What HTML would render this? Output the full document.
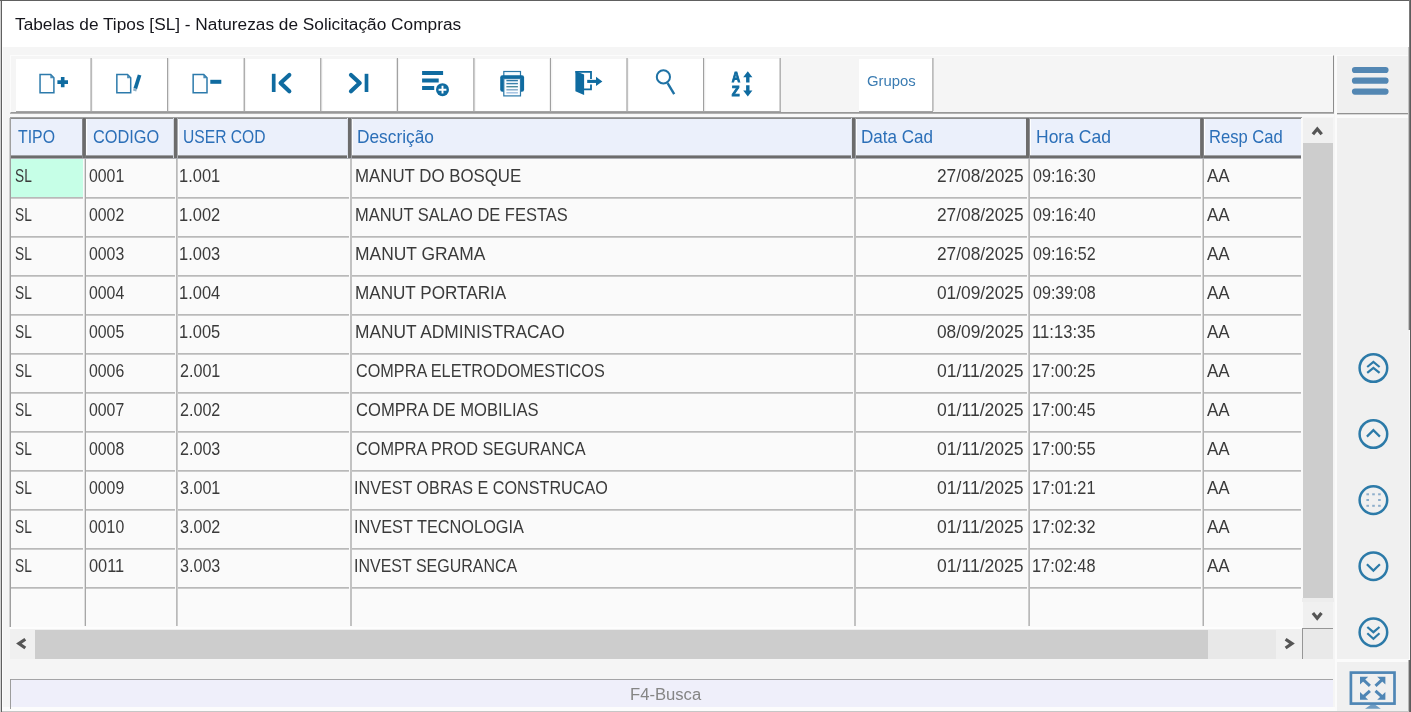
<!DOCTYPE html>
<html lang="pt-BR">
<head>
<meta charset="utf-8">
<title>Tabelas de Tipos [SL] - Naturezas de Solicitação Compras</title>
<style>
*{box-sizing:border-box;margin:0;padding:0}
html,body{width:1411px;height:712px;overflow:hidden;background:#f5f5f5;font-family:"Liberation Sans",sans-serif}
#win{position:absolute;left:0;top:0;width:1411px;height:712px;background:#f5f5f5;overflow:hidden}
#win div,#win span,#win svg{position:absolute}
#cnt{left:0;top:0;width:1411px;height:712px;filter:blur(0.45px)}
#title{left:2px;top:1px;width:1407px;height:46px;background:#fff}
.t{white-space:nowrap;transform-origin:0 0;line-height:20px;height:20px;display:block}
.ttl{font-size:17.3px;color:#16161c}
.grp{font-size:14px;color:#3b7cb2}
.st{font-size:16px;color:#858585}
#tb{left:10px;top:55px;width:1324px;height:58px;border-top:1px solid #fcfcfc;border-left:1px solid #fcfcfc;border-right:1px solid #8c8c8c;border-bottom:1px solid #989898;box-shadow:0 1px 0 #b2b2b2}
.btn{top:59px;height:53px;background:#fff;border-bottom:1px solid #a4a4a4}
.h{font-size:18.4px;color:#2b6fb8}
.c{font-size:18.4px;color:#3a3a3a}
</style>
</head>
<body>
<div id="win">
<div id="title"></div>
<span class="t ttl" style="left:15.30px;top:14.01px;transform:scaleX(0.9988)">Tabelas de Tipos [SL] - Naturezas de Solicitação Compras</span>
<div id="cnt">
<div id="tb"></div>
<div class="btn" style="left:16px;width:765px"></div>
<div style="left:91px;top:59px;width:1px;height:52px;background:#fcfcfc"></div>
<div style="left:92px;top:59px;width:1px;height:52px;background:#f4f4f4"></div>
<div style="left:90px;top:58px;width:1px;height:53px;background:#cdcdcd"></div>
<div style="left:91px;top:58px;width:1px;height:53px;background:#bababa"></div>
<div style="left:168px;top:59px;width:1px;height:52px;background:#f7f7f7"></div>
<div style="left:169px;top:59px;width:1px;height:52px;background:#f9f9f9"></div>
<div style="left:167px;top:58px;width:1px;height:53px;background:#a4a4a4"></div>
<div style="left:168px;top:58px;width:1px;height:53px;background:#e4e4e4"></div>
<div style="left:244px;top:59px;width:1px;height:52px;background:#fdfdfd"></div>
<div style="left:245px;top:59px;width:1px;height:52px;background:#f4f4f4"></div>
<div style="left:246px;top:59px;width:1px;height:52px;background:#fefefe"></div>
<div style="left:243px;top:58px;width:1px;height:53px;background:#d9d9d9"></div>
<div style="left:244px;top:58px;width:1px;height:53px;background:#aeaeae"></div>
<div style="left:321px;top:59px;width:1px;height:52px;background:#f9f9f9"></div>
<div style="left:322px;top:59px;width:1px;height:52px;background:#f8f8f8"></div>
<div style="left:320px;top:58px;width:1px;height:53px;background:#afafaf"></div>
<div style="left:321px;top:58px;width:1px;height:53px;background:#d8d8d8"></div>
<div style="left:398px;top:59px;width:1px;height:52px;background:#f4f4f4"></div>
<div style="left:399px;top:59px;width:1px;height:52px;background:#fdfdfd"></div>
<div style="left:396px;top:58px;width:1px;height:53px;background:#e5e5e5"></div>
<div style="left:397px;top:58px;width:1px;height:53px;background:#a2a2a2"></div>
<div style="left:474px;top:59px;width:1px;height:52px;background:#fafafa"></div>
<div style="left:475px;top:59px;width:1px;height:52px;background:#f6f6f6"></div>
<div style="left:473px;top:58px;width:1px;height:53px;background:#bbbbbb"></div>
<div style="left:474px;top:58px;width:1px;height:53px;background:#cccccc"></div>
<div style="left:551px;top:59px;width:1px;height:52px;background:#f5f5f5"></div>
<div style="left:552px;top:59px;width:1px;height:52px;background:#fbfbfb"></div>
<div style="left:549px;top:58px;width:1px;height:53px;background:#f1f1f1"></div>
<div style="left:550px;top:58px;width:1px;height:53px;background:#a0a0a0"></div>
<div style="left:551px;top:58px;width:1px;height:53px;background:#f5f5f5"></div>
<div style="left:627px;top:59px;width:1px;height:52px;background:#fbfbfb"></div>
<div style="left:628px;top:59px;width:1px;height:52px;background:#f5f5f5"></div>
<div style="left:626px;top:58px;width:1px;height:53px;background:#c7c7c7"></div>
<div style="left:627px;top:58px;width:1px;height:53px;background:#c0c0c0"></div>
<div style="left:704px;top:59px;width:1px;height:52px;background:#f6f6f6"></div>
<div style="left:705px;top:59px;width:1px;height:52px;background:#fafafa"></div>
<div style="left:703px;top:58px;width:1px;height:53px;background:#a0a0a0"></div>
<div style="left:704px;top:58px;width:1px;height:53px;background:#eaeaea"></div>
<div style="left:779px;top:58px;width:1px;height:53px;background:#d3d3d3"></div>
<div style="left:780px;top:58px;width:1px;height:53px;background:#b4b4b4"></div>
<div class="btn" style="left:859px;width:74px"></div>
<div style="left:932px;top:58px;width:1px;height:53px;background:#bcbcbc"></div>
<div style="left:933px;top:58px;width:1px;height:53px;background:#cbcbcb"></div>
<span class="t grp" style="left:867.40px;top:70.75px;transform:scaleX(1.0629)">Grupos</span>
<svg id="icons" style="left:0;top:55px" width="1340" height="60" viewBox="0 55 1340 60" fill="none" stroke="none">
<path d="M40.05,74.6 H50.7 L53.9,77.8 V92.8 H40.05 Z" stroke="#2c7aab" stroke-width="1.5" fill="#fefefe"/><path d="M50.3,74.6 V78.2 H53.9 Z" fill="#4a8db8"/>
<path d="M62.7,77 V87.2 M57.4,82.1 H68" stroke="#0f6ba0" stroke-width="3.6"/>
<path d="M116.85,74.6 H127.5 L130.7,77.8 V92.8 H116.85 Z" stroke="#2c7aab" stroke-width="1.5" fill="#fefefe"/><path d="M127.1,74.6 V78.2 H130.7 Z" fill="#4a8db8"/>
<path d="M139.6,75 L135.3,88.6" stroke="#0f6ba0" stroke-width="3.7"/><path d="M135.3,88.6 L134.6,91" stroke="#8fb0c6" stroke-width="3.4"/>
<path d="M193.15,74.6 H203.8 L207.0,77.8 V92.8 H193.15 Z" stroke="#2c7aab" stroke-width="1.5" fill="#fefefe"/><path d="M203.4,74.6 V78.2 H207.0 Z" fill="#4a8db8"/>
<path d="M210.3,81.8 H221.3" stroke="#0f6ba0" stroke-width="4"/>
<path d="M273.7,73.8 V92" stroke="#0f6ba0" stroke-width="3.7"/><path d="M289.3,75 L280.6,83 L289.3,91.2" stroke="#0f6ba0" stroke-width="4.2" stroke-linecap="round" stroke-linejoin="round"/>
<path d="M366.5,73.8 V92" stroke="#0f6ba0" stroke-width="3.7"/><path d="M351,75 L359.7,83 L351,91.2" stroke="#0f6ba0" stroke-width="4.2" stroke-linecap="round" stroke-linejoin="round"/>
<path d="M422.1,73.1 H443.1 M422.1,80.5 H438.7 M422.1,88.1 H434.2" stroke="#0f6ba0" stroke-width="4"/>
<circle cx="442.5" cy="89.7" r="7.3" fill="#fff"/><circle cx="442.5" cy="89.7" r="6.5" fill="#0f6ba0"/><path d="M442.5,85.8 V93.6 M438.6,89.7 H446.4" stroke="#fff" stroke-width="1.9"/>
<rect x="503.8" y="71.5" width="16.7" height="5" fill="#f4fbff" stroke="#2b78a8" stroke-width="1.2"/>
<rect x="500.2" y="75.3" width="23.9" height="16.5" rx="2.2" fill="#0f6ba0"/>
<rect x="503.8" y="78.6" width="16.7" height="17.3" fill="#fafdff" stroke="#2b78a8" stroke-width="1.2"/>
<path d="M506.4,80.6 H517.9" stroke="#2f7aa8" stroke-width="1.4"/>
<path d="M506.4,83.6 H517.9" stroke="#3b82ad" stroke-width="1.4"/>
<path d="M506.4,86.7 H517.9" stroke="#4a8a9c" stroke-width="1.4"/>
<path d="M506.4,89.8 H517.9" stroke="#7fa6c6" stroke-width="1.4"/>
<path d="M506.4,92.8 H517.9" stroke="#9fbfe0" stroke-width="1.4"/>
<path d="M575.4,71 L584.1,74.6 V95 L575.4,91.2 Z" fill="#0f6ba0"/>
<path d="M575.4,71.9 H591 V79 M591,84.6 V89.3 H584" stroke="#0f6ba0" stroke-width="1.8"/>
<path d="M587.2,81.4 H597.5" stroke="#0f6ba0" stroke-width="3.1"/><path d="M596,76.7 L602.4,81.4 L596,86.1 Z" fill="#0f6ba0"/>
<circle cx="663.4" cy="76.9" r="6.6" stroke="#1f72a5" stroke-width="2"/><path d="M667.6,83.2 L674.2,94.2" stroke="#1f72a5" stroke-width="2.4"/>
<text x="731.7" y="82" font-family="Liberation Sans, sans-serif" font-weight="bold" font-size="14.6" fill="#0f6ba0" stroke="#0f6ba0" stroke-width="1" textLength="8.4" lengthAdjust="spacingAndGlyphs">A</text>
<text x="731.8" y="95.8" font-family="Liberation Sans, sans-serif" font-weight="bold" font-size="14.6" fill="#0f6ba0" stroke="#0f6ba0" stroke-width="1" textLength="7.8" lengthAdjust="spacingAndGlyphs">Z</text>
<path d="M747.8,75 V82.5 M747.8,85.3 V92" stroke="#0f6ba0" stroke-width="3.4"/><path d="M743.2,77.2 L747.8,71.3 L752.4,77.2 Z M743.2,90.4 L747.8,96.4 L752.4,90.4 Z" fill="#0f6ba0"/>
</svg>
<div style="left:1335px;top:55px;width:74px;height:656px;background:#fbfbfb"></div>
<div style="left:1337px;top:56px;width:72px;height:58px;background:#f0f0f0;border-right:1px solid #ababab;border-bottom:1px solid #929292;box-shadow:0 1px 0 #d8d8d8"></div>
<svg style="left:1337px;top:55px" width="72" height="59" viewBox="1337 55 72 59"><path d="M1355,70 H1385.5 M1355,80.7 H1385.5 M1355,91.6 H1385.5" stroke="#5387b3" stroke-width="6.2" stroke-linecap="round"/></svg>
<div style="left:1337px;top:118px;width:72px;height:541px;background:#f0f0f0"></div>
<svg style="left:1337px;top:340px" width="72" height="320" viewBox="1337 340 72 320" fill="none">
<circle cx="1373.4" cy="368" r="13.8" stroke="#2c7aa8" stroke-width="2.5"/>
<circle cx="1373.4" cy="434" r="13.8" stroke="#2c7aa8" stroke-width="2.5"/>
<circle cx="1373.4" cy="500.1" r="13.8" stroke="#2c7aa8" stroke-width="2.5"/>
<circle cx="1373.4" cy="566.2" r="13.8" stroke="#2c7aa8" stroke-width="2.5"/>
<circle cx="1373.4" cy="632.3" r="13.8" stroke="#2c7aa8" stroke-width="2.5"/>
<path d="M1367.2,367 L1373.4,362 L1379.6,367 M1367.2,372.8 L1373.4,367.8 L1379.6,372.8" stroke="#2c7aa8" stroke-width="2.2"/>
<path d="M1366.9,436.6 L1373.4,430.1 L1379.9,436.6" stroke="#2c7aa8" stroke-width="2.2"/>
<rect x="1366.4" y="493.3" width="2.6" height="2" fill="#8eaecb"/>
<rect x="1366.4" y="499.0" width="2.6" height="2" fill="#8eaecb"/>
<rect x="1366.4" y="504.8" width="2.6" height="2" fill="#8eaecb"/>
<rect x="1372.2" y="493.3" width="2.6" height="2" fill="#8eaecb"/>
<rect x="1372.2" y="504.8" width="2.6" height="2" fill="#8eaecb"/>
<rect x="1378.1" y="493.3" width="2.6" height="2" fill="#8eaecb"/>
<rect x="1378.1" y="499.0" width="2.6" height="2" fill="#8eaecb"/>
<rect x="1378.1" y="504.8" width="2.6" height="2" fill="#8eaecb"/>
<path d="M1366.9,564.2 L1373.4,570.6 L1379.9,564.2" stroke="#2c7aa8" stroke-width="2.2"/>
<path d="M1367.3,627 L1373.4,632.2 L1379.5,627 M1367.3,633.3 L1373.4,638.7 L1379.5,633.3" stroke="#2c7aa8" stroke-width="2.2"/>
</svg>
<div style="left:1337px;top:662px;width:72px;height:49px;background:#f0f0f0"></div>
<svg style="left:1340px;top:664px" width="68" height="48" viewBox="1340 664 68 48" fill="none">
<rect x="1350.9" y="672.6" width="43.6" height="31" stroke="#4f86b5" stroke-width="2.7"/>
<path d="M1370.5,705 H1375.5 L1380.8,708.7 H1365 Z" fill="#6f9cc2"/>
<path d="M1369.9,685.8 L1363.2,679.7" stroke="#4f86b5" stroke-width="3"/><path d="M1360.0,676.8 L1368.2,676.8 L1360.0,684.6 Z" fill="#4f86b5"/>
<path d="M1375.5,685.8 L1382.2,679.7" stroke="#4f86b5" stroke-width="3"/><path d="M1385.4,676.8 L1377.2,676.8 L1385.4,684.6 Z" fill="#4f86b5"/>
<path d="M1369.9,690.8 L1363.2,696.9" stroke="#4f86b5" stroke-width="3"/><path d="M1360.0,699.8 L1368.2,699.8 L1360.0,692.0 Z" fill="#4f86b5"/>
<path d="M1375.5,690.8 L1382.2,696.9" stroke="#4f86b5" stroke-width="3"/><path d="M1385.4,699.8 L1377.2,699.8 L1385.4,692.0 Z" fill="#4f86b5"/>
</svg>
<div style="left:11px;top:118px;width:1291px;height:509px;background:#fafafa"></div>
<div style="left:11px;top:158px;width:72px;height:39px;background:#c6ffe7"></div>
<div style="left:10px;top:114px;width:1324px;height:3px;background:#f9f9f9"></div>
<div style="left:11px;top:118px;width:1291px;height:40px;background:#ebf0fb"></div>
<div style="left:10px;top:117px;width:1292px;height:1px;background:#a0a1a2"></div>
<div style="left:10px;top:118px;width:1292px;height:1px;background:#8b8c8c"></div>
<div style="left:11px;top:155px;width:1291px;height:1px;background:#9fa1a5"></div>
<div style="left:11px;top:156px;width:1291px;height:1px;background:#6c6c6c"></div>
<div style="left:11px;top:157px;width:1291px;height:1px;background:#6c6c6c"></div>
<div style="left:11px;top:158px;width:1291px;height:1px;background:#acaeb4"></div>
<div style="left:85px;top:119px;width:1px;height:36px;background:#edf1fb"></div>
<div style="left:86px;top:119px;width:1px;height:36px;background:#ffffff"></div>
<div style="left:87px;top:119px;width:1px;height:36px;background:#eef3fc"></div>
<div style="left:82px;top:118px;width:1px;height:40px;background:#858689"></div>
<div style="left:83px;top:118px;width:1px;height:40px;background:#6c6c6c"></div>
<div style="left:84px;top:118px;width:1px;height:40px;background:#6c6c6c"></div>
<div style="left:85px;top:118px;width:1px;height:40px;background:#767677"></div>
<div style="left:177px;top:119px;width:1px;height:36px;background:#f4f7fd"></div>
<div style="left:178px;top:119px;width:1px;height:36px;background:#fbfcfe"></div>
<div style="left:173px;top:118px;width:1px;height:40px;background:#d2d6de"></div>
<div style="left:174px;top:118px;width:1px;height:40px;background:#6c6c6c"></div>
<div style="left:175px;top:118px;width:1px;height:40px;background:#6c6c6c"></div>
<div style="left:176px;top:118px;width:1px;height:40px;background:#6c6c6c"></div>
<div style="left:177px;top:118px;width:1px;height:40px;background:#a8abb0"></div>
<div style="left:351px;top:119px;width:1px;height:36px;background:#f2f6fc"></div>
<div style="left:352px;top:119px;width:1px;height:36px;background:#fcfdfe"></div>
<div style="left:347px;top:118px;width:1px;height:40px;background:#dee3ed"></div>
<div style="left:348px;top:118px;width:1px;height:40px;background:#6c6c6c"></div>
<div style="left:349px;top:118px;width:1px;height:40px;background:#6c6c6c"></div>
<div style="left:350px;top:118px;width:1px;height:40px;background:#6c6c6c"></div>
<div style="left:351px;top:118px;width:1px;height:40px;background:#9c9ea2"></div>
<div style="left:855px;top:119px;width:1px;height:36px;background:#f2f6fc"></div>
<div style="left:856px;top:119px;width:1px;height:36px;background:#fcfdfe"></div>
<div style="left:851px;top:118px;width:1px;height:40px;background:#dee3ed"></div>
<div style="left:852px;top:118px;width:1px;height:40px;background:#6c6c6c"></div>
<div style="left:853px;top:118px;width:1px;height:40px;background:#6c6c6c"></div>
<div style="left:854px;top:118px;width:1px;height:40px;background:#6c6c6c"></div>
<div style="left:855px;top:118px;width:1px;height:40px;background:#9c9ea2"></div>
<div style="left:1029px;top:119px;width:1px;height:36px;background:#f1f4fc"></div>
<div style="left:1030px;top:119px;width:1px;height:36px;background:#feffff"></div>
<div style="left:1026px;top:118px;width:1px;height:40px;background:#6c6c6c"></div>
<div style="left:1027px;top:118px;width:1px;height:40px;background:#6c6c6c"></div>
<div style="left:1028px;top:118px;width:1px;height:40px;background:#6c6c6c"></div>
<div style="left:1029px;top:118px;width:1px;height:40px;background:#8f9093"></div>
<div style="left:1203px;top:119px;width:1px;height:36px;background:#eef3fc"></div>
<div style="left:1204px;top:119px;width:1px;height:36px;background:#ffffff"></div>
<div style="left:1205px;top:119px;width:1px;height:36px;background:#edf1fb"></div>
<div style="left:1200px;top:118px;width:1px;height:40px;background:#79797a"></div>
<div style="left:1201px;top:118px;width:1px;height:40px;background:#6c6c6c"></div>
<div style="left:1202px;top:118px;width:1px;height:40px;background:#6c6c6c"></div>
<div style="left:1203px;top:118px;width:1px;height:40px;background:#828385"></div>
<span class="t h" style="left:18.30px;top:126.82px;transform:scaleX(0.8613)">TIPO</span>
<span class="t h" style="left:93.30px;top:126.82px;transform:scaleX(0.8885)">CODIGO</span>
<span class="t h" style="left:183.45px;top:126.82px;transform:scaleX(0.8498)">USER COD</span>
<span class="t h" style="left:357.36px;top:126.82px;transform:scaleX(0.9400)">Descrição</span>
<span class="t h" style="left:861.37px;top:126.82px;transform:scaleX(0.9272)">Data Cad</span>
<span class="t h" style="left:1035.75px;top:126.82px;transform:scaleX(0.9512)">Hora Cad</span>
<span class="t h" style="left:1209.40px;top:126.82px;transform:scaleX(0.9025)">Resp Cad</span>
<div style="left:11px;top:197px;width:72px;height:1px;background:#b9b9b9"></div>
<div style="left:11px;top:198px;width:72px;height:1px;background:#cbcbcb"></div>
<div style="left:86px;top:197px;width:89px;height:1px;background:#b9b9b9"></div>
<div style="left:86px;top:198px;width:89px;height:1px;background:#cbcbcb"></div>
<div style="left:178px;top:197px;width:171px;height:1px;background:#b9b9b9"></div>
<div style="left:178px;top:198px;width:171px;height:1px;background:#cbcbcb"></div>
<div style="left:352px;top:197px;width:501px;height:1px;background:#b9b9b9"></div>
<div style="left:352px;top:198px;width:501px;height:1px;background:#cbcbcb"></div>
<div style="left:856px;top:197px;width:171px;height:1px;background:#b9b9b9"></div>
<div style="left:856px;top:198px;width:171px;height:1px;background:#cbcbcb"></div>
<div style="left:1030px;top:197px;width:171px;height:1px;background:#b9b9b9"></div>
<div style="left:1030px;top:198px;width:171px;height:1px;background:#cbcbcb"></div>
<div style="left:1204px;top:197px;width:98px;height:1px;background:#b9b9b9"></div>
<div style="left:1204px;top:198px;width:98px;height:1px;background:#cbcbcb"></div>
<div style="left:11px;top:236px;width:72px;height:1px;background:#b9b9b9"></div>
<div style="left:11px;top:237px;width:72px;height:1px;background:#cbcbcb"></div>
<div style="left:86px;top:236px;width:89px;height:1px;background:#b9b9b9"></div>
<div style="left:86px;top:237px;width:89px;height:1px;background:#cbcbcb"></div>
<div style="left:178px;top:236px;width:171px;height:1px;background:#b9b9b9"></div>
<div style="left:178px;top:237px;width:171px;height:1px;background:#cbcbcb"></div>
<div style="left:352px;top:236px;width:501px;height:1px;background:#b9b9b9"></div>
<div style="left:352px;top:237px;width:501px;height:1px;background:#cbcbcb"></div>
<div style="left:856px;top:236px;width:171px;height:1px;background:#b9b9b9"></div>
<div style="left:856px;top:237px;width:171px;height:1px;background:#cbcbcb"></div>
<div style="left:1030px;top:236px;width:171px;height:1px;background:#b9b9b9"></div>
<div style="left:1030px;top:237px;width:171px;height:1px;background:#cbcbcb"></div>
<div style="left:1204px;top:236px;width:98px;height:1px;background:#b9b9b9"></div>
<div style="left:1204px;top:237px;width:98px;height:1px;background:#cbcbcb"></div>
<div style="left:11px;top:275px;width:72px;height:1px;background:#b9b9b9"></div>
<div style="left:11px;top:276px;width:72px;height:1px;background:#cbcbcb"></div>
<div style="left:86px;top:275px;width:89px;height:1px;background:#b9b9b9"></div>
<div style="left:86px;top:276px;width:89px;height:1px;background:#cbcbcb"></div>
<div style="left:178px;top:275px;width:171px;height:1px;background:#b9b9b9"></div>
<div style="left:178px;top:276px;width:171px;height:1px;background:#cbcbcb"></div>
<div style="left:352px;top:275px;width:501px;height:1px;background:#b9b9b9"></div>
<div style="left:352px;top:276px;width:501px;height:1px;background:#cbcbcb"></div>
<div style="left:856px;top:275px;width:171px;height:1px;background:#b9b9b9"></div>
<div style="left:856px;top:276px;width:171px;height:1px;background:#cbcbcb"></div>
<div style="left:1030px;top:275px;width:171px;height:1px;background:#b9b9b9"></div>
<div style="left:1030px;top:276px;width:171px;height:1px;background:#cbcbcb"></div>
<div style="left:1204px;top:275px;width:98px;height:1px;background:#b9b9b9"></div>
<div style="left:1204px;top:276px;width:98px;height:1px;background:#cbcbcb"></div>
<div style="left:11px;top:314px;width:72px;height:1px;background:#b9b9b9"></div>
<div style="left:11px;top:315px;width:72px;height:1px;background:#cbcbcb"></div>
<div style="left:86px;top:314px;width:89px;height:1px;background:#b9b9b9"></div>
<div style="left:86px;top:315px;width:89px;height:1px;background:#cbcbcb"></div>
<div style="left:178px;top:314px;width:171px;height:1px;background:#b9b9b9"></div>
<div style="left:178px;top:315px;width:171px;height:1px;background:#cbcbcb"></div>
<div style="left:352px;top:314px;width:501px;height:1px;background:#b9b9b9"></div>
<div style="left:352px;top:315px;width:501px;height:1px;background:#cbcbcb"></div>
<div style="left:856px;top:314px;width:171px;height:1px;background:#b9b9b9"></div>
<div style="left:856px;top:315px;width:171px;height:1px;background:#cbcbcb"></div>
<div style="left:1030px;top:314px;width:171px;height:1px;background:#b9b9b9"></div>
<div style="left:1030px;top:315px;width:171px;height:1px;background:#cbcbcb"></div>
<div style="left:1204px;top:314px;width:98px;height:1px;background:#b9b9b9"></div>
<div style="left:1204px;top:315px;width:98px;height:1px;background:#cbcbcb"></div>
<div style="left:11px;top:353px;width:72px;height:1px;background:#b9b9b9"></div>
<div style="left:11px;top:354px;width:72px;height:1px;background:#cbcbcb"></div>
<div style="left:86px;top:353px;width:89px;height:1px;background:#b9b9b9"></div>
<div style="left:86px;top:354px;width:89px;height:1px;background:#cbcbcb"></div>
<div style="left:178px;top:353px;width:171px;height:1px;background:#b9b9b9"></div>
<div style="left:178px;top:354px;width:171px;height:1px;background:#cbcbcb"></div>
<div style="left:352px;top:353px;width:501px;height:1px;background:#b9b9b9"></div>
<div style="left:352px;top:354px;width:501px;height:1px;background:#cbcbcb"></div>
<div style="left:856px;top:353px;width:171px;height:1px;background:#b9b9b9"></div>
<div style="left:856px;top:354px;width:171px;height:1px;background:#cbcbcb"></div>
<div style="left:1030px;top:353px;width:171px;height:1px;background:#b9b9b9"></div>
<div style="left:1030px;top:354px;width:171px;height:1px;background:#cbcbcb"></div>
<div style="left:1204px;top:353px;width:98px;height:1px;background:#b9b9b9"></div>
<div style="left:1204px;top:354px;width:98px;height:1px;background:#cbcbcb"></div>
<div style="left:11px;top:392px;width:72px;height:1px;background:#b9b9b9"></div>
<div style="left:11px;top:393px;width:72px;height:1px;background:#cbcbcb"></div>
<div style="left:86px;top:392px;width:89px;height:1px;background:#b9b9b9"></div>
<div style="left:86px;top:393px;width:89px;height:1px;background:#cbcbcb"></div>
<div style="left:178px;top:392px;width:171px;height:1px;background:#b9b9b9"></div>
<div style="left:178px;top:393px;width:171px;height:1px;background:#cbcbcb"></div>
<div style="left:352px;top:392px;width:501px;height:1px;background:#b9b9b9"></div>
<div style="left:352px;top:393px;width:501px;height:1px;background:#cbcbcb"></div>
<div style="left:856px;top:392px;width:171px;height:1px;background:#b9b9b9"></div>
<div style="left:856px;top:393px;width:171px;height:1px;background:#cbcbcb"></div>
<div style="left:1030px;top:392px;width:171px;height:1px;background:#b9b9b9"></div>
<div style="left:1030px;top:393px;width:171px;height:1px;background:#cbcbcb"></div>
<div style="left:1204px;top:392px;width:98px;height:1px;background:#b9b9b9"></div>
<div style="left:1204px;top:393px;width:98px;height:1px;background:#cbcbcb"></div>
<div style="left:11px;top:431px;width:72px;height:1px;background:#b9b9b9"></div>
<div style="left:11px;top:432px;width:72px;height:1px;background:#cbcbcb"></div>
<div style="left:86px;top:431px;width:89px;height:1px;background:#b9b9b9"></div>
<div style="left:86px;top:432px;width:89px;height:1px;background:#cbcbcb"></div>
<div style="left:178px;top:431px;width:171px;height:1px;background:#b9b9b9"></div>
<div style="left:178px;top:432px;width:171px;height:1px;background:#cbcbcb"></div>
<div style="left:352px;top:431px;width:501px;height:1px;background:#b9b9b9"></div>
<div style="left:352px;top:432px;width:501px;height:1px;background:#cbcbcb"></div>
<div style="left:856px;top:431px;width:171px;height:1px;background:#b9b9b9"></div>
<div style="left:856px;top:432px;width:171px;height:1px;background:#cbcbcb"></div>
<div style="left:1030px;top:431px;width:171px;height:1px;background:#b9b9b9"></div>
<div style="left:1030px;top:432px;width:171px;height:1px;background:#cbcbcb"></div>
<div style="left:1204px;top:431px;width:98px;height:1px;background:#b9b9b9"></div>
<div style="left:1204px;top:432px;width:98px;height:1px;background:#cbcbcb"></div>
<div style="left:11px;top:470px;width:72px;height:1px;background:#b9b9b9"></div>
<div style="left:11px;top:471px;width:72px;height:1px;background:#cbcbcb"></div>
<div style="left:86px;top:470px;width:89px;height:1px;background:#b9b9b9"></div>
<div style="left:86px;top:471px;width:89px;height:1px;background:#cbcbcb"></div>
<div style="left:178px;top:470px;width:171px;height:1px;background:#b9b9b9"></div>
<div style="left:178px;top:471px;width:171px;height:1px;background:#cbcbcb"></div>
<div style="left:352px;top:470px;width:501px;height:1px;background:#b9b9b9"></div>
<div style="left:352px;top:471px;width:501px;height:1px;background:#cbcbcb"></div>
<div style="left:856px;top:470px;width:171px;height:1px;background:#b9b9b9"></div>
<div style="left:856px;top:471px;width:171px;height:1px;background:#cbcbcb"></div>
<div style="left:1030px;top:470px;width:171px;height:1px;background:#b9b9b9"></div>
<div style="left:1030px;top:471px;width:171px;height:1px;background:#cbcbcb"></div>
<div style="left:1204px;top:470px;width:98px;height:1px;background:#b9b9b9"></div>
<div style="left:1204px;top:471px;width:98px;height:1px;background:#cbcbcb"></div>
<div style="left:11px;top:509px;width:72px;height:1px;background:#b9b9b9"></div>
<div style="left:11px;top:510px;width:72px;height:1px;background:#cbcbcb"></div>
<div style="left:86px;top:509px;width:89px;height:1px;background:#b9b9b9"></div>
<div style="left:86px;top:510px;width:89px;height:1px;background:#cbcbcb"></div>
<div style="left:178px;top:509px;width:171px;height:1px;background:#b9b9b9"></div>
<div style="left:178px;top:510px;width:171px;height:1px;background:#cbcbcb"></div>
<div style="left:352px;top:509px;width:501px;height:1px;background:#b9b9b9"></div>
<div style="left:352px;top:510px;width:501px;height:1px;background:#cbcbcb"></div>
<div style="left:856px;top:509px;width:171px;height:1px;background:#b9b9b9"></div>
<div style="left:856px;top:510px;width:171px;height:1px;background:#cbcbcb"></div>
<div style="left:1030px;top:509px;width:171px;height:1px;background:#b9b9b9"></div>
<div style="left:1030px;top:510px;width:171px;height:1px;background:#cbcbcb"></div>
<div style="left:1204px;top:509px;width:98px;height:1px;background:#b9b9b9"></div>
<div style="left:1204px;top:510px;width:98px;height:1px;background:#cbcbcb"></div>
<div style="left:11px;top:548px;width:72px;height:1px;background:#b9b9b9"></div>
<div style="left:11px;top:549px;width:72px;height:1px;background:#cbcbcb"></div>
<div style="left:86px;top:548px;width:89px;height:1px;background:#b9b9b9"></div>
<div style="left:86px;top:549px;width:89px;height:1px;background:#cbcbcb"></div>
<div style="left:178px;top:548px;width:171px;height:1px;background:#b9b9b9"></div>
<div style="left:178px;top:549px;width:171px;height:1px;background:#cbcbcb"></div>
<div style="left:352px;top:548px;width:501px;height:1px;background:#b9b9b9"></div>
<div style="left:352px;top:549px;width:501px;height:1px;background:#cbcbcb"></div>
<div style="left:856px;top:548px;width:171px;height:1px;background:#b9b9b9"></div>
<div style="left:856px;top:549px;width:171px;height:1px;background:#cbcbcb"></div>
<div style="left:1030px;top:548px;width:171px;height:1px;background:#b9b9b9"></div>
<div style="left:1030px;top:549px;width:171px;height:1px;background:#cbcbcb"></div>
<div style="left:1204px;top:548px;width:98px;height:1px;background:#b9b9b9"></div>
<div style="left:1204px;top:549px;width:98px;height:1px;background:#cbcbcb"></div>
<div style="left:11px;top:587px;width:72px;height:1px;background:#b9b9b9"></div>
<div style="left:11px;top:588px;width:72px;height:1px;background:#cbcbcb"></div>
<div style="left:86px;top:587px;width:89px;height:1px;background:#b9b9b9"></div>
<div style="left:86px;top:588px;width:89px;height:1px;background:#cbcbcb"></div>
<div style="left:178px;top:587px;width:171px;height:1px;background:#b9b9b9"></div>
<div style="left:178px;top:588px;width:171px;height:1px;background:#cbcbcb"></div>
<div style="left:352px;top:587px;width:501px;height:1px;background:#b9b9b9"></div>
<div style="left:352px;top:588px;width:501px;height:1px;background:#cbcbcb"></div>
<div style="left:856px;top:587px;width:171px;height:1px;background:#b9b9b9"></div>
<div style="left:856px;top:588px;width:171px;height:1px;background:#cbcbcb"></div>
<div style="left:1030px;top:587px;width:171px;height:1px;background:#b9b9b9"></div>
<div style="left:1030px;top:588px;width:171px;height:1px;background:#cbcbcb"></div>
<div style="left:1204px;top:587px;width:98px;height:1px;background:#b9b9b9"></div>
<div style="left:1204px;top:588px;width:98px;height:1px;background:#cbcbcb"></div>
<div style="left:84px;top:159px;width:1px;height:467px;background:#dddddd"></div>
<div style="left:85px;top:159px;width:1px;height:467px;background:#a7a7a7"></div>
<div style="left:176px;top:159px;width:1px;height:467px;background:#b9b9b9"></div>
<div style="left:177px;top:159px;width:1px;height:467px;background:#cbcbcb"></div>
<div style="left:350px;top:159px;width:1px;height:467px;background:#c2c2c2"></div>
<div style="left:351px;top:159px;width:1px;height:467px;background:#c2c2c2"></div>
<div style="left:854px;top:159px;width:1px;height:467px;background:#c2c2c2"></div>
<div style="left:855px;top:159px;width:1px;height:467px;background:#c2c2c2"></div>
<div style="left:1028px;top:159px;width:1px;height:467px;background:#cbcbcb"></div>
<div style="left:1029px;top:159px;width:1px;height:467px;background:#b9b9b9"></div>
<div style="left:1202px;top:159px;width:1px;height:467px;background:#d4d4d4"></div>
<div style="left:1203px;top:159px;width:1px;height:467px;background:#b0b0b0"></div>
<div style="left:9px;top:118px;width:1px;height:509px;background:#cfcfcf"></div>
<div style="left:10px;top:118px;width:1px;height:509px;background:#9f9f9f"></div>
<span class="t c" style="left:14.70px;top:165.82px;transform:scaleX(0.7455)">SL</span>
<span class="t c" style="left:89.00px;top:165.82px;transform:scaleX(0.8603)">0001</span>
<span class="t c" style="left:178.80px;top:165.82px;transform:scaleX(0.8952)">1.001</span>
<span class="t c" style="left:354.68px;top:165.82px;transform:scaleX(0.9158)">MANUT DO BOSQUE</span>
<span class="t c" style="left:936.80px;top:165.82px;transform:scaleX(0.9410)">27/08/2025</span>
<span class="t c" style="left:1032.50px;top:165.82px;transform:scaleX(0.8745)">09:16:30</span>
<span class="t c" style="left:1207.10px;top:165.82px;transform:scaleX(0.9261)">AA</span>
<span class="t c" style="left:14.70px;top:204.82px;transform:scaleX(0.7455)">SL</span>
<span class="t c" style="left:89.00px;top:204.82px;transform:scaleX(0.8603)">0002</span>
<span class="t c" style="left:178.80px;top:204.82px;transform:scaleX(0.8952)">1.002</span>
<span class="t c" style="left:354.70px;top:204.82px;transform:scaleX(0.8960)">MANUT SALAO DE FESTAS</span>
<span class="t c" style="left:936.80px;top:204.82px;transform:scaleX(0.9410)">27/08/2025</span>
<span class="t c" style="left:1032.50px;top:204.82px;transform:scaleX(0.8745)">09:16:40</span>
<span class="t c" style="left:1207.10px;top:204.82px;transform:scaleX(0.9261)">AA</span>
<span class="t c" style="left:14.70px;top:243.82px;transform:scaleX(0.7455)">SL</span>
<span class="t c" style="left:89.00px;top:243.82px;transform:scaleX(0.8603)">0003</span>
<span class="t c" style="left:178.80px;top:243.82px;transform:scaleX(0.8952)">1.003</span>
<span class="t c" style="left:354.65px;top:243.82px;transform:scaleX(0.9472)">MANUT GRAMA</span>
<span class="t c" style="left:936.80px;top:243.82px;transform:scaleX(0.9410)">27/08/2025</span>
<span class="t c" style="left:1032.50px;top:243.82px;transform:scaleX(0.8745)">09:16:52</span>
<span class="t c" style="left:1207.10px;top:243.82px;transform:scaleX(0.9261)">AA</span>
<span class="t c" style="left:14.70px;top:282.82px;transform:scaleX(0.7455)">SL</span>
<span class="t c" style="left:89.00px;top:282.82px;transform:scaleX(0.8603)">0004</span>
<span class="t c" style="left:178.80px;top:282.82px;transform:scaleX(0.8952)">1.004</span>
<span class="t c" style="left:354.67px;top:282.82px;transform:scaleX(0.9303)">MANUT PORTARIA</span>
<span class="t c" style="left:936.80px;top:282.82px;transform:scaleX(0.9410)">01/09/2025</span>
<span class="t c" style="left:1032.50px;top:282.82px;transform:scaleX(0.8745)">09:39:08</span>
<span class="t c" style="left:1207.10px;top:282.82px;transform:scaleX(0.9261)">AA</span>
<span class="t c" style="left:14.70px;top:321.82px;transform:scaleX(0.7455)">SL</span>
<span class="t c" style="left:89.00px;top:321.82px;transform:scaleX(0.8603)">0005</span>
<span class="t c" style="left:178.80px;top:321.82px;transform:scaleX(0.8952)">1.005</span>
<span class="t c" style="left:354.66px;top:321.82px;transform:scaleX(0.9427)">MANUT ADMINISTRACAO</span>
<span class="t c" style="left:936.80px;top:321.82px;transform:scaleX(0.9410)">08/09/2025</span>
<span class="t c" style="left:1031.60px;top:321.82px;transform:scaleX(0.9044)">11:13:35</span>
<span class="t c" style="left:1207.10px;top:321.82px;transform:scaleX(0.9261)">AA</span>
<span class="t c" style="left:14.70px;top:360.82px;transform:scaleX(0.7455)">SL</span>
<span class="t c" style="left:89.00px;top:360.82px;transform:scaleX(0.8603)">0006</span>
<span class="t c" style="left:179.70px;top:360.82px;transform:scaleX(0.8757)">2.001</span>
<span class="t c" style="left:355.60px;top:360.82px;transform:scaleX(0.8820)">COMPRA ELETRODOMESTICOS</span>
<span class="t c" style="left:936.80px;top:360.82px;transform:scaleX(0.9552)">01/11/2025</span>
<span class="t c" style="left:1031.61px;top:360.82px;transform:scaleX(0.8869)">17:00:25</span>
<span class="t c" style="left:1207.10px;top:360.82px;transform:scaleX(0.9261)">AA</span>
<span class="t c" style="left:14.70px;top:399.82px;transform:scaleX(0.7455)">SL</span>
<span class="t c" style="left:89.00px;top:399.82px;transform:scaleX(0.8603)">0007</span>
<span class="t c" style="left:179.70px;top:399.82px;transform:scaleX(0.8757)">2.002</span>
<span class="t c" style="left:355.60px;top:399.82px;transform:scaleX(0.9026)">COMPRA DE MOBILIAS</span>
<span class="t c" style="left:936.80px;top:399.82px;transform:scaleX(0.9552)">01/11/2025</span>
<span class="t c" style="left:1031.61px;top:399.82px;transform:scaleX(0.8869)">17:00:45</span>
<span class="t c" style="left:1207.10px;top:399.82px;transform:scaleX(0.9261)">AA</span>
<span class="t c" style="left:14.70px;top:438.82px;transform:scaleX(0.7455)">SL</span>
<span class="t c" style="left:89.00px;top:438.82px;transform:scaleX(0.8603)">0008</span>
<span class="t c" style="left:179.70px;top:438.82px;transform:scaleX(0.8757)">2.003</span>
<span class="t c" style="left:355.60px;top:438.82px;transform:scaleX(0.8844)">COMPRA PROD SEGURANCA</span>
<span class="t c" style="left:936.80px;top:438.82px;transform:scaleX(0.9552)">01/11/2025</span>
<span class="t c" style="left:1031.61px;top:438.82px;transform:scaleX(0.8869)">17:00:55</span>
<span class="t c" style="left:1207.10px;top:438.82px;transform:scaleX(0.9261)">AA</span>
<span class="t c" style="left:14.70px;top:477.82px;transform:scaleX(0.7455)">SL</span>
<span class="t c" style="left:89.00px;top:477.82px;transform:scaleX(0.8603)">0009</span>
<span class="t c" style="left:179.70px;top:477.82px;transform:scaleX(0.8757)">3.001</span>
<span class="t c" style="left:353.52px;top:477.82px;transform:scaleX(0.8785)">INVEST OBRAS E CONSTRUCAO</span>
<span class="t c" style="left:936.80px;top:477.82px;transform:scaleX(0.9552)">01/11/2025</span>
<span class="t c" style="left:1031.61px;top:477.82px;transform:scaleX(0.8869)">17:01:21</span>
<span class="t c" style="left:1207.10px;top:477.82px;transform:scaleX(0.9261)">AA</span>
<span class="t c" style="left:14.70px;top:516.82px;transform:scaleX(0.7455)">SL</span>
<span class="t c" style="left:89.00px;top:516.82px;transform:scaleX(0.8603)">0010</span>
<span class="t c" style="left:179.70px;top:516.82px;transform:scaleX(0.8757)">3.002</span>
<span class="t c" style="left:353.51px;top:516.82px;transform:scaleX(0.8877)">INVEST TECNOLOGIA</span>
<span class="t c" style="left:936.80px;top:516.82px;transform:scaleX(0.9552)">01/11/2025</span>
<span class="t c" style="left:1031.61px;top:516.82px;transform:scaleX(0.8869)">17:02:32</span>
<span class="t c" style="left:1207.10px;top:516.82px;transform:scaleX(0.9261)">AA</span>
<span class="t c" style="left:14.70px;top:555.82px;transform:scaleX(0.7455)">SL</span>
<span class="t c" style="left:89.00px;top:555.82px;transform:scaleX(0.8902)">0011</span>
<span class="t c" style="left:179.70px;top:555.82px;transform:scaleX(0.8757)">3.003</span>
<span class="t c" style="left:353.53px;top:555.82px;transform:scaleX(0.8692)">INVEST SEGURANCA</span>
<span class="t c" style="left:936.80px;top:555.82px;transform:scaleX(0.9552)">01/11/2025</span>
<span class="t c" style="left:1031.61px;top:555.82px;transform:scaleX(0.8869)">17:02:48</span>
<span class="t c" style="left:1207.10px;top:555.82px;transform:scaleX(0.9261)">AA</span>
<div style="left:1301px;top:118px;width:2px;height:510px;background:#fafafa"></div><div style="left:1303px;top:118px;width:30px;height:510px;background:#f0f0f0"></div>
<div style="left:1303px;top:143px;width:30px;height:455px;background:#cdcdcd"></div>
<div style="left:1302px;top:598px;width:32px;height:4px;background:#ededed"></div>
<svg style="left:1302px;top:118px" width="32" height="510" viewBox="1302 118 32 510" fill="none"><path d="M1312.9,134.2 L1317.3,128.9 L1321.7,134.2" stroke="#555" stroke-width="3.2"/><path d="M1312.9,613 L1317.2,618.3 L1321.5,613" stroke="#555" stroke-width="3.2"/></svg>
<div style="left:10px;top:627px;width:1292px;height:2px;background:#fdfdfd"></div>
<div style="left:10px;top:629px;width:1292px;height:30px;background:#f0f0f0"></div>
<div style="left:35px;top:630px;width:1173px;height:29px;background:#cdcdcd"></div>
<div style="left:1208px;top:630px;width:68px;height:29px;background:#e8e8e8"></div>
<svg style="left:10px;top:628px" width="1292" height="32" viewBox="10 628 1292 32" fill="none"><path d="M25.3,639.2 L18.9,643.6 L25.3,648" stroke="#555" stroke-width="3.2"/><path d="M1285.6,639.2 L1292,643.6 L1285.6,648" stroke="#555" stroke-width="3.2"/></svg>
<div style="left:1302px;top:628px;width:31px;height:31px;background:#e9e9e9;border-top:1px solid #969696;border-left:1px solid #969696"></div>
<div style="left:2px;top:707px;width:1333px;height:4px;background:#fcfcfc"></div>
<div style="left:10px;top:679px;width:1323px;height:28px;background:#efeffa;border-top:1px solid #a4a4a6"></div>
<div style="left:10px;top:679px;width:1px;height:30px;background:#9c9c9c"></div>
<span class="t st" style="left:629.56px;top:684.56px;transform:scaleX(1.0389)">F4-Busca</span>
</div>
<div style="left:2px;top:47px;width:1px;height:664px;background:#fdfdfd"></div>
<div style="left:0;top:711px;width:1411px;height:1px;background:#c6c6c6"></div>
<div style="left:0;top:0;width:1px;height:712px;background:#d0d0d0"></div>
<div style="left:1px;top:0;width:1px;height:712px;background:#606060"></div>
<div style="left:0;top:0;width:1411px;height:1px;background:#606060"></div>
<div style="left:1410px;top:0;width:1px;height:712px;background:#5c5c5c"></div>
<div style="left:1409px;top:0;width:1px;height:330px;background:#7a7a7a"></div><div style="left:1408px;top:47px;width:1px;height:283px;background:#c4c4c4"></div>
<div style="left:1409px;top:330px;width:1px;height:330px;background:#fafafa"></div>
<div style="left:1409px;top:660px;width:1px;height:52px;background:#6a6a6a"></div><div style="left:1408px;top:660px;width:1px;height:51px;background:#b8b8b8"></div>
</div>
</body>
</html>
